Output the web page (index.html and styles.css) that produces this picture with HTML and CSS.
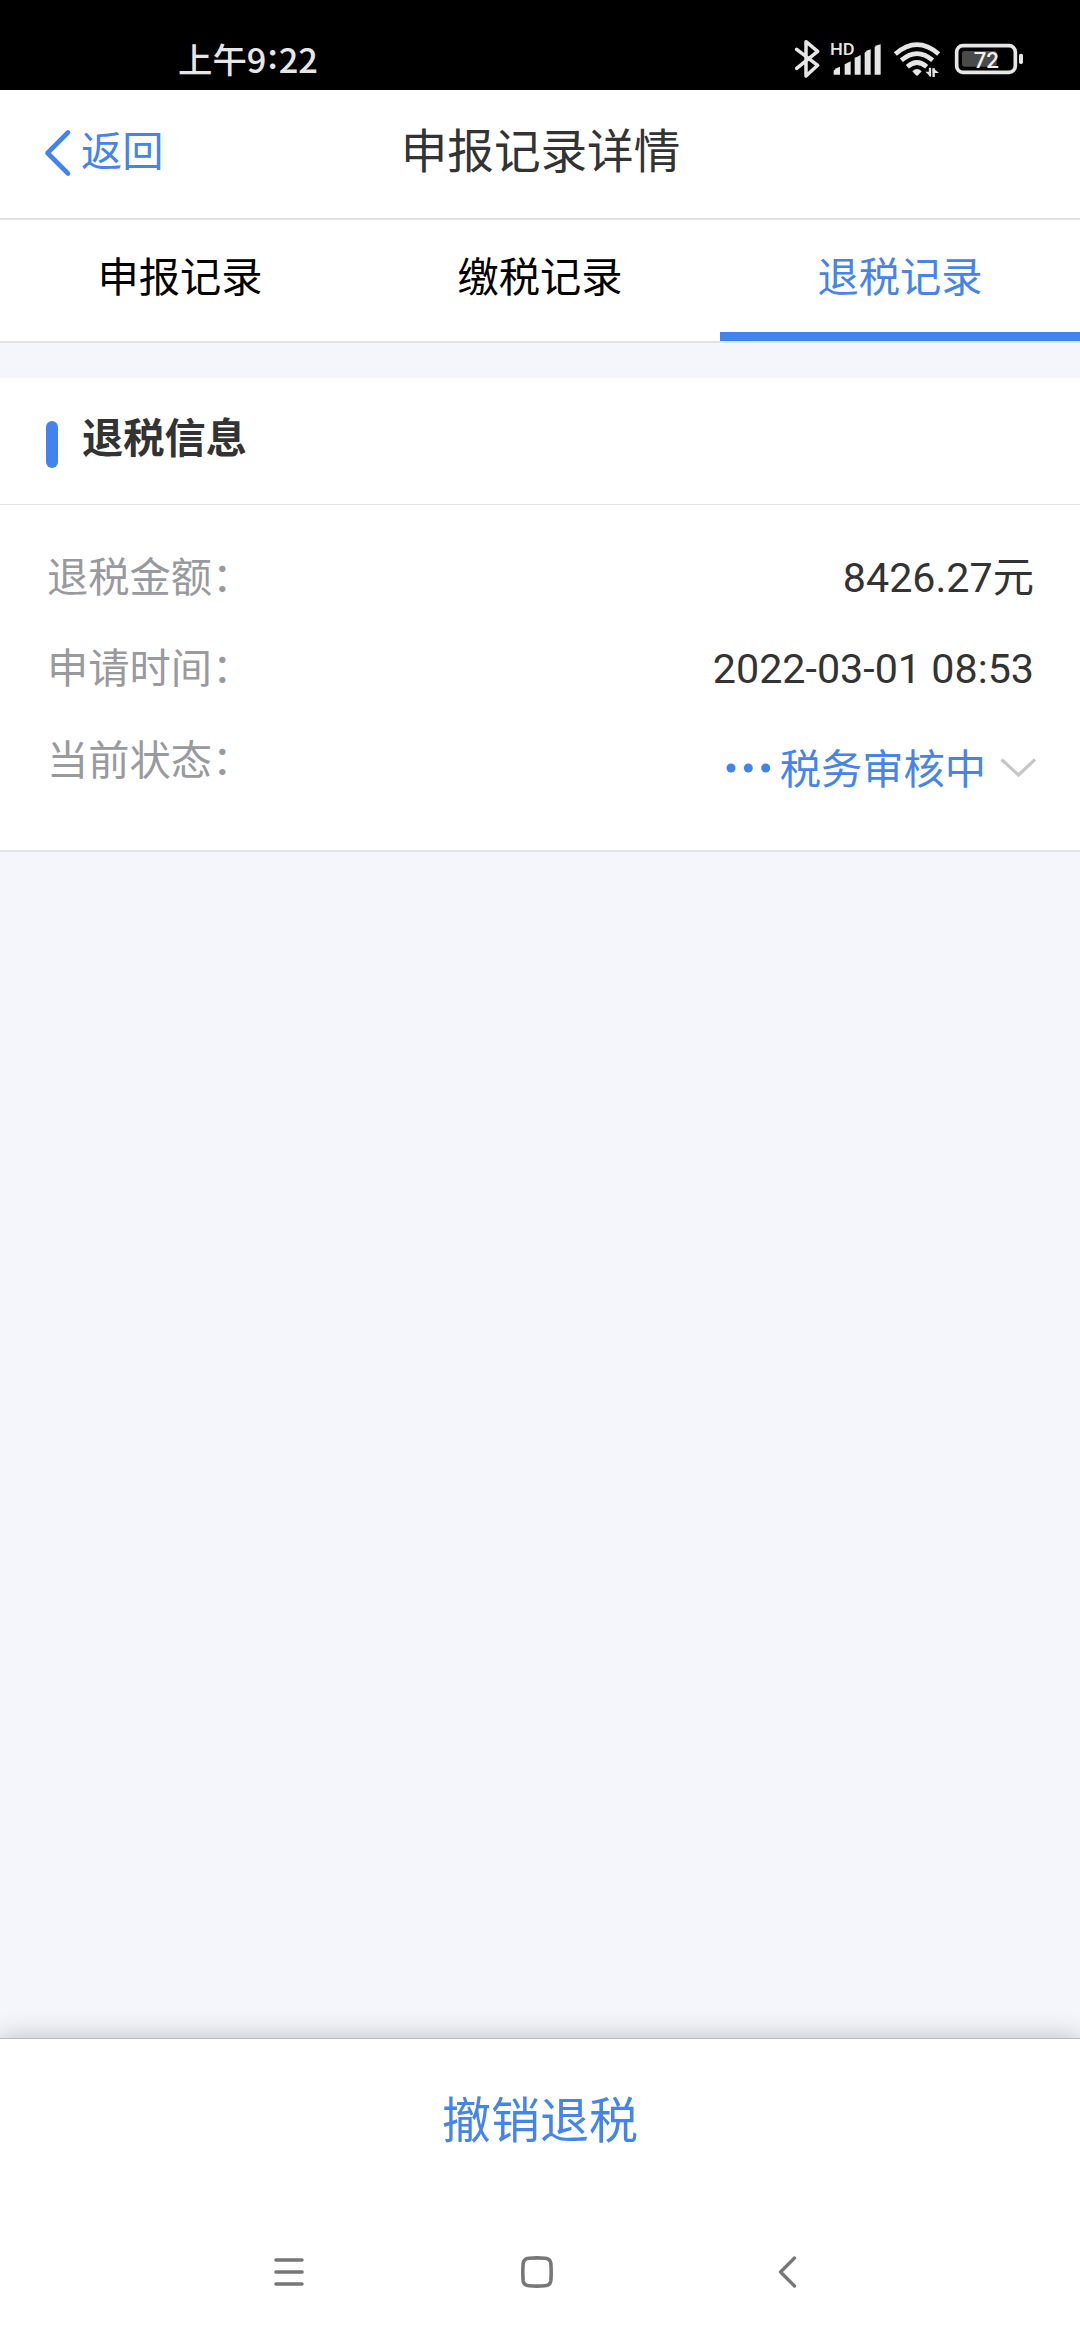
FILE: index.html
```html
<!DOCTYPE html>
<html lang="zh-CN">
<head>
<meta charset="utf-8">
<title>申报记录详情</title>
<link rel="stylesheet" href="styles.css">
</head>
<body>
<div class="screen">
  <div class="status-bar">
    <div class="clock">上午9<span class="clock-colon">:</span>22</div>
    <div class="status-icons">
      <svg class="ic-bluetooth" viewBox="72 0 78 180" fill="none" stroke="#e6e6e6" stroke-width="10.500" stroke-linecap="round" stroke-linejoin="round">
        <path d="M80 88 L143 136 L108 168 V65 L143 94 L80 145"/>
      </svg>
      <svg class="ic-signal" viewBox="180 0 156 180" fill="#e6e6e6">
        <text x="180" y="105" class="hd-text" textLength="74" lengthAdjust="spacingAndGlyphs">HD</text>
        <path d="M191 164 V152 Q198 143 210 140 V164Z"/>
        <path d="M224 164 V133 L242 124 V164Z"/>
        <path d="M254 164 V113 Q261 111 272 105 V164Z"/>
        <path d="M284 164 V98 Q290 91 302 88 V164Z"/>
        <path d="M314 164 V81 Q320 75 332 73 V164Z"/>
      </svg>
      <svg class="ic-wifi" viewBox="369 0 144 180" fill="none" stroke="#e6e6e6" stroke-width="14">
        <path d="M376 102 Q441 46 506 102"/>
        <path d="M394 121 Q441 81 488 121"/>
        <path d="M412 140 Q441 115 470 140"/>
        <path d="M427 154 Q441 140 455 154 L445 165 Q441 169 437 165Z" fill="#e6e6e6" stroke="none"/>
        <path d="M480 143 V169 M491 171 V145" stroke-width="7"/>
        <path d="M466 155 H483 V171Z M488 143 L507 159 H488Z" fill="#e6e6e6" stroke="none"/>
      </svg>
      <svg class="ic-battery" viewBox="552 0 210 180">
        <rect x="560" y="77" width="176" height="80" rx="19" fill="none" stroke="#e6e6e6" stroke-width="11"/>
        <rect x="747" y="101" width="12" height="31" rx="5" fill="#e6e6e6"/>
        <rect x="576" y="93" width="104" height="47" rx="7" fill="#4a4a4a"/>
        <text x="649" y="143" text-anchor="middle" class="battery-text">72</text>
      </svg>
    </div>
  </div>

  <header class="header">
    <a class="back">
      <svg class="ic-back" viewBox="0 0 28 50" fill="none" stroke="#4283ee" stroke-width="4.600" stroke-linecap="round" stroke-linejoin="round"><path d="M24 4.500 L3.500 25 L24 45.500"/></svg>
      <span>返回</span>
    </a>
    <h1 class="title">申报记录详情</h1>
  </header>

  <nav class="tabs">
    <a class="tab">申报记录</a>
    <a class="tab">缴税记录</a>
    <a class="tab tab-active">退税记录</a>
  </nav>

  <section class="card">
    <h2 class="card-title">退税信息</h2>
    <div class="card-body">
      <div class="row"><span class="label">退税金额：</span><span class="value">8426.27元</span></div>
      <div class="row"><span class="label">申请时间：</span><span class="value">2022-03-01 08:53</span></div>
      <div class="row row-state">
        <span class="label">当前状态：</span>
        <span class="value state">
          <svg class="ic-dots" viewBox="0 0 44 10" fill="#4283ee"><circle cx="5" cy="5" r="4.500"/><circle cx="22.300" cy="5" r="4.500"/><circle cx="39.700" cy="5" r="4.500"/></svg>
          <span>税务审核中</span>
          <svg class="ic-chevron" viewBox="0 0 36 20" fill="none" stroke="#c6c6c6" stroke-width="3.200"><path d="M1.500 1.500 L18.500 17 L35 1.500"/></svg>
        </span>
      </div>
    </div>
  </section>

  <footer class="footer">
    <a class="cancel">撤销退税</a>
    <div class="system-nav">
      <svg class="nav-menu" viewBox="0 0 30 32" stroke="#777" stroke-width="3.600" stroke-linecap="round"><path d="M2 4 H28 M2 16 H28 M2 28 H28"/></svg>
      <svg class="nav-home" viewBox="0 0 34 32" fill="none" stroke="#777" stroke-width="3.600"><path d="M9 2.200 Q17 1.500 25 2.200 Q30 2.600 30.800 7 Q31.600 16 30.800 25 Q30 29.400 25 29.800 Q17 30.500 9 29.800 Q4 29.400 3.200 25 Q2.400 16 3.200 7 Q4 2.600 9 2.200Z"/></svg>
      <svg class="nav-back" viewBox="0 0 20 32" fill="none" stroke="#777" stroke-width="3.300" stroke-linecap="round" stroke-linejoin="round"><path d="M16.500 2 L2.500 16 L16.500 30"/></svg>
    </div>
  </footer>
</div>
</body>
</html>
```
FILE: styles.css
```css
* {
  box-sizing: border-box;
}

body {
  margin: 0;
  font-family: Roboto, "Noto Sans CJK SC", sans-serif;
  font-size: 41.25px;
  color: #333;
}

svg {
  display: block;
  flex: none;
}

.screen {
  display: flex;
  flex-direction: column;
  width: 1080px;
  height: 2340px;
  overflow: hidden;
  background: #f4f6fb;
}

/* Status bar */
.status-bar {
  flex: none;
  display: flex;
  justify-content: space-between;
  height: 90px;
  padding: 20px 56px 0 178px;
  background: #000;
}

.clock {
  color: #e6e6e6;
  font-family: "Noto Sans CJK SC", sans-serif;
  font-size: 34.4px;
  font-weight: 500;
  line-height: 77px;
}

.clock-colon {
  position: relative;
  top: -4px;
  margin: 0 1px;
}

.status-icons {
  display: flex;
  height: 60px;
}

.ic-bluetooth { width: 26px; height: 60px; }
.ic-signal { width: 52px; height: 60px; margin-left: 10px; }
.ic-wifi { width: 48px; height: 60px; margin-left: 11px; }
.ic-battery { width: 70px; height: 60px; margin-left: 13px; }

.hd-text {
  font: 500 49px Roboto, sans-serif;
}

.battery-text {
  font: 500 67px Roboto, sans-serif;
  fill: #f0f0f0;
}

/* Page header */
.header {
  flex: none;
  display: grid;
  grid-template-columns: 1fr auto 1fr;
  height: 130px;
  padding: 0 43px 0 44px;
  border-bottom: 2px solid #e2e2e2;
  background: #fff;
  line-height: 124px;
}

.back {
  display: flex;
  align-items: center;
  gap: 9px;
  height: 125px;
  color: #4584e8;
}

.back span {
  height: 125px;
}

.ic-back { width: 28px; height: 50px; }

.title {
  margin: 0;
  font-size: 46.6px;
  font-weight: 400;
}

/* Tabs */
.tabs {
  flex: none;
  display: grid;
  grid-template-columns: repeat(3, 1fr);
  height: 123px;
  background: #fff;
}

.tab {
  border-bottom: 2px solid #e2e2e2;
  color: #000;
  line-height: 116px;
  text-align: center;
}

.tab-active {
  border-bottom-color: #d8e7fc;
  box-shadow: inset 0 -9px #4283ee;
  color: #4584e8;
}

/* Refund card */
.card {
  flex: none;
  margin-top: 35px;
  border-bottom: 2px solid #e1e3e8;
  background: #fff;
}

.card-title {
  display: flex;
  gap: 24px;
  height: 127px;
  margin: 0;
  padding-left: 46px;
  border-bottom: 1px solid #e2e2e2;
  font-size: 41.25px;
  font-weight: 700;
  line-height: 123px;
}

.card-title::before {
  content: "";
  width: 12px;
  height: 47px;
  margin-top: 43px;
  border-radius: 6px;
  background: #4283ee;
}

.card-body {
  padding: 28px 46px 34px;
}

.row {
  display: flex;
  justify-content: space-between;
  line-height: 91px;
}

.row-state {
  padding-top: 1px;
}

.label {
  padding-left: 1px;
  color: #999a9e;
}

.state {
  display: flex;
  align-items: center;
  margin-right: -2px;
  padding-top: 9px;
  color: #4584e8;
}

.ic-dots { width: 44px; height: 10px; margin: 0 10px 5px 0; }
.ic-chevron { width: 36px; height: 20px; margin: 0 0 5px 14px; }

/* Bottom action and system navigation */
.footer {
  display: flex;
  flex-direction: column;
  height: 302px;
  margin-top: auto;
  border-top: 1px solid #b8b8bd;
  background: #fff;
  box-shadow: 0 0 26px rgba(0, 0, 0, 0.24);
}

.cancel {
  color: #4584e8;
  font-size: 49px;
  line-height: 165px;
  text-align: center;
}

.system-nav {
  display: flex;
  padding: 52px 0 0 274px;
}

.nav-menu { width: 30px; height: 32px; }
.nav-home { width: 34px; height: 32px; margin-left: 216px; }
.nav-back { width: 20px; height: 32px; margin-left: 224px; }
```
